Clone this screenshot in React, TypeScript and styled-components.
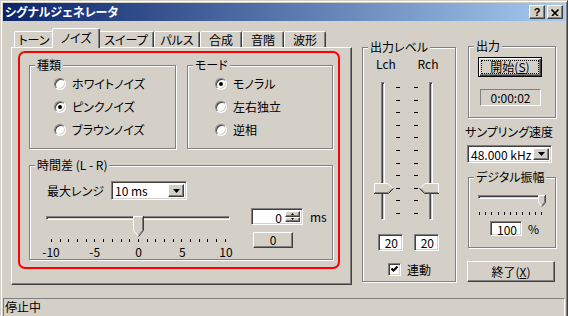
import React from 'react';
import styled, { createGlobalStyle } from 'styled-components';

const FACE = '#d4d0c8';
const SHADOW = '#808080';
const DARK = '#404040';

const GlobalStyle = createGlobalStyle`
  html, body {
    margin: 0;
    padding: 0;
    overflow: hidden;
    background: ${FACE};
  }
  body {
    font-family: "MS UI Gothic", "Noto Sans CJK JP", sans-serif;
    font-size: 12px;
    line-height: 12px;
    font-feature-settings: "palt";
    color: #000;
  }
`;

const Window = styled.div`
  box-sizing: border-box;
  width: 568px;
  height: 322px;
  padding: 2px;
  display: flex;
  flex-direction: column;
  background: ${FACE};
  border: 1px solid;
  border-color: ${FACE} ${DARK} ${DARK} ${FACE};
  box-shadow: inset 1px 1px #fff, inset -1px -1px ${SHADOW};
`;

const TitleBar = styled.div`
  flex: none;
  height: 18px;
  display: flex;
  align-items: center;
  padding: 0 2px;
  background: linear-gradient(to right, #0a246a, #a6caf0);
`;

const TitleText = styled.div`
  flex: 1;
  color: #fff;
  font-weight: bold;
`;

const CaptionButtons = styled.div`
  display: flex;
  gap: 2px;
`;

const Raised = `
  background: ${FACE};
  border: 1px solid;
  border-color: #fff ${DARK} ${DARK} #fff;
  box-shadow: inset -1px -1px ${SHADOW};
`;

const Sunken = `
  border: 1px solid;
  border-color: ${SHADOW} #fff #fff ${SHADOW};
  box-shadow: inset 1px 1px ${DARK}, inset -1px -1px ${FACE};
`;

const CaptionButton = styled.div`
  box-sizing: border-box;
  width: 16px;
  height: 14px;
  display: flex;
  align-items: center;
  justify-content: center;
  ${Raised}
  font-family: "Liberation Sans", sans-serif;
  font-weight: bold;
  font-size: 11px;
`;

const Body = styled.div`
  flex: none;
  box-sizing: border-box;
  height: 277px;
  display: flex;
  align-items: flex-start;
  padding: 7px 0 0 8px;
`;

/* ---- tab control ---- */

const TabControl = styled.div`
  width: 341px;
`;

const TabRow = styled.div`
  height: 19px;
  display: flex;
  align-items: flex-end;
  padding-left: 3px;
`;

const Tab = styled.div<{ $w: number; $active?: boolean }>`
  position: relative;
  z-index: ${p => (p.$active ? 1 : 0)};
  box-sizing: border-box;
  width: ${p => p.$w + (p.$active ? 4 : 0)}px;
  height: ${p => (p.$active ? 20 : 16)}px;
  margin: 0 ${p => (p.$active ? -2 : 0)}px ${p => (p.$active ? -1 : 0)}px;
  padding-top: ${p => (p.$active ? 3 : 2)}px;
  text-align: center;
  white-space: nowrap;
  background: ${FACE};
  border: 1px solid;
  border-bottom: none;
  border-color: #fff ${DARK} transparent #fff;
  border-radius: 2px 2px 0 0;
  box-shadow: inset -1px 0 ${SHADOW};
`;

const TabPanel = styled.div`
  box-sizing: border-box;
  height: 238px;
  padding: 3px 0 0 6px;
  border: 1px solid;
  border-color: #fff ${DARK} ${DARK} #fff;
  box-shadow: inset -1px -1px ${SHADOW};
`;

const Highlight = styled.div`
  box-sizing: border-box;
  width: 322px;
  height: 218px;
  padding: 6px 0 0 9px;
  border: 2px solid #ff0000;
  border-radius: 7px;
  display: grid;
  grid-template-columns: 147px 146px;
  grid-template-rows: 90px 101px;
  column-gap: 11px;
  row-gap: 10px;
`;

/* ---- group boxes ---- */

const GroupBox = styled.fieldset<{ $w?: number; $h?: number }>`
  box-sizing: border-box;
  width: ${p => (p.$w ? `${p.$w}px` : '100%')};
  height: ${p => (p.$h ? `${p.$h}px` : '100%')};
  margin: 0;
  padding: 0;
  min-width: 0;
  border: 1px solid ${SHADOW};
  box-shadow: inset 1px 1px #fff, 1px 1px #fff;
`;

const Legend = styled.legend`
  margin-left: 5px;
  padding: 0 2px;
  height: 12px;
  line-height: 12px;
  background: ${FACE};
  white-space: nowrap;
`;

const WideGroup = styled(GroupBox)`
  grid-column: 1 / -1;
`;

const RadioList = styled.div<{ $indent: number }>`
  display: flex;
  flex-direction: column;
  padding: 1px 0 0 ${p => p.$indent}px;
`;

const RadioRow = styled.div`
  height: 23px;
  display: flex;
  align-items: center;
  gap: 6px;
  white-space: nowrap;
`;

const Radio = styled.span<{ $checked?: boolean }>`
  box-sizing: border-box;
  width: 12px;
  height: 12px;
  border-radius: 50%;
  background: #fff;
  ${Sunken}
  display: flex;
  align-items: center;
  justify-content: center;

  &::after {
    content: '';
    width: 4px;
    height: 4px;
    border-radius: 50%;
    background: ${p => (p.$checked ? '#000' : 'transparent')};
  }
`;

/* ---- inputs ---- */

const ComboBox = styled.div<{ $w: number }>`
  box-sizing: border-box;
  width: ${p => p.$w}px;
  height: 19px;
  padding: 2px;
  display: flex;
  background: #fff;
  ${Sunken}
`;

const ComboText = styled.span`
  flex: 1;
  padding: 1px 0 0 1px;
  white-space: nowrap;
`;

const ComboArrow = styled.span`
  box-sizing: border-box;
  width: 16px;
  display: flex;
  align-items: center;
  justify-content: center;
  ${Raised}
`;

const ArrowDown = () => (
  <svg width="7" height="4" viewBox="0 0 7 4">
    <path d="M0 0H7L3.5 4Z" fill="#000" />
  </svg>
);

const NumberEdit = styled.div<{ $w: number; $h: number }>`
  box-sizing: border-box;
  width: ${p => p.$w}px;
  height: ${p => p.$h}px;
  padding: 2px 4px 0 0;
  text-align: right;
  background: #fff;
  ${Sunken}
`;

const SpinEdit = styled.div`
  box-sizing: border-box;
  width: 52px;
  height: 17px;
  padding: 2px;
  display: flex;
  background: #fff;
  ${Sunken}
`;

const SpinValue = styled.span`
  flex: 1;
  padding: 1px 3px 0 0;
  text-align: right;
`;

const SpinButtons = styled.div`
  width: 15px;
  display: flex;
  flex-direction: column;
`;

const SpinHalf = styled.div`
  box-sizing: border-box;
  flex: 1;
  display: flex;
  align-items: center;
  justify-content: center;
  ${Raised}
`;

const PushButton = styled.div<{ $w: number; $h: number; $default?: boolean }>`
  box-sizing: border-box;
  width: ${p => p.$w}px;
  height: ${p => p.$h}px;
  display: flex;
  align-items: center;
  justify-content: center;
  white-space: nowrap;
  background: ${FACE};
  border: 1px solid;
  border-color: ${p => (p.$default ? '#000' : `#fff ${DARK} ${DARK} #fff`)};
  box-shadow: ${p =>
    p.$default
      ? `inset 1px 1px #fff, inset -1px -1px ${DARK}, inset -2px -2px ${SHADOW}`
      : `inset -1px -1px ${SHADOW}`};
`;

const FocusRing = styled.span`
  flex: 1;
  align-self: stretch;
  margin: 3px;
  display: flex;
  align-items: center;
  justify-content: center;
  outline: 1px dotted #000;
`;

const Readout = styled.div`
  box-sizing: border-box;
  width: 61px;
  height: 17px;
  padding-top: 2px;
  text-align: center;
  border: 1px solid;
  border-color: ${SHADOW} #fff #fff ${SHADOW};
`;

const CheckBox = styled.span`
  box-sizing: border-box;
  width: 13px;
  height: 13px;
  display: flex;
  align-items: center;
  justify-content: center;
  background: #fff;
  ${Sunken}
`;

/* ---- sliders ---- */

const SliderArea = styled.div<{ $w: number; $h: number }>`
  position: relative;
  width: ${p => p.$w}px;
  height: ${p => p.$h}px;
`;

const HTrack = styled.div<{ $w: number; $top: number }>`
  box-sizing: border-box;
  width: ${p => p.$w}px;
  height: 4px;
  margin-top: ${p => p.$top}px;
  background: ${FACE};
  border: 1px solid;
  border-color: ${SHADOW} #fff #fff ${SHADOW};
  box-shadow: inset 1px 1px ${DARK};
`;

const ThumbHolder = styled.div`
  position: absolute;
  top: 0;
  line-height: 0;
`;

const TickRow = styled.div<{ $w: number; $h: number; $left: number; $top: number }>`
  width: ${p => p.$w}px;
  height: ${p => p.$h}px;
  margin: ${p => p.$top}px 0 0 ${p => p.$left}px;
  display: flex;
  justify-content: space-between;
`;

const Tick = styled.span`
  width: 1px;
  height: 100%;
  background: #000;
`;

const ScaleMark = styled.span`
  width: 0;
  display: flex;
  justify-content: center;
  white-space: nowrap;
`;

const VSliderBox = styled.div<{ $flip?: boolean }>`
  position: relative;
  width: 20px;
  height: 100%;
  margin-left: ${p => (p.$flip ? 1 : 0)}px;
  display: flex;
  justify-content: ${p => (p.$flip ? 'flex-end' : 'flex-start')};
`;

const VTrack = styled.div<{ $flip?: boolean }>`
  box-sizing: border-box;
  width: 4px;
  height: 100%;
  margin: 0 ${p => (p.$flip ? 6 : 0)}px 0 ${p => (p.$flip ? 0 : 7)}px;
  background: ${FACE};
  border: 1px solid;
  border-color: ${SHADOW} #fff #fff ${SHADOW};
  box-shadow: inset 1px 1px ${DARK};
`;

const DashColumn = styled.div<{ $left: number }>`
  box-sizing: border-box;
  width: 4px;
  height: 100%;
  margin-left: ${p => p.$left}px;
  padding: 5px 0 6px;
  display: flex;
  flex-direction: column;
  justify-content: space-between;
`;

const Dash = styled.span`
  height: 1px;
  background: #000;
`;

const ThumbDown = ({ w, h }: { w: number; h: number }) => {
  const tip = h - Math.round(w / 2) - 1;
  const mid = (w - 1) / 2;
  return (
    <svg width={w} height={h} viewBox={`0 0 ${w} ${h}`}>
      <path d={`M0 0H${w}V${tip}L${mid + 0.5} ${h}L0 ${tip}Z`} fill={FACE} />
      <path d={`M0.5 ${tip + 0.5}V0.5H${w - 1.5}`} stroke="#fff" fill="none" />
      <path d={`M0.5 ${tip + 0.5}L${mid} ${h - 1}`} stroke="#fff" fill="none" />
      <path d={`M${w - 0.5} 0V${tip + 0.5}L${mid + 0.5} ${h - 0.5}`} stroke={DARK} fill="none" />
      <path d={`M${w - 1.5} 1V${tip}L${mid + 0.5} ${h - 1.5}`} stroke={SHADOW} fill="none" />
    </svg>
  );
};

const ThumbSide = ({ flip }: { flip?: boolean }) => (
  <svg
    width="20"
    height="11"
    viewBox="0 0 20 11"
    style={flip ? { transform: 'scaleX(-1)' } : undefined}
  >
    <path d="M0 0H14L19.5 5.5L14 11H0Z" fill={FACE} />
    <path d="M0.5 10V0.5H14L18.5 5" stroke="#fff" fill="none" />
    <path d="M0 10.5H14.5L19.5 5.5" stroke={DARK} fill="none" />
    <path d="M1 9.5H14L18.5 5.5" stroke={SHADOW} fill="none" />
  </svg>
);

const CloseGlyph = () => (
  <svg width="8" height="7" viewBox="0 0 8 7">
    <path d="M0.5 0.5L7 7M7.5 0.5L1 7" stroke="#000" strokeWidth="1.6" fill="none" />
  </svg>
);

const CheckGlyph = () => (
  <svg width="7" height="7" viewBox="0 0 7 7">
    <path d="M0.5 2.5L2.5 4.5L6.5 0.5" stroke="#000" strokeWidth="2" fill="none" />
  </svg>
);

const SpinArrow = ({ up }: { up?: boolean }) => (
  <svg width="3" height="2" viewBox="0 0 3 2">
    <path d={up ? 'M0 2H3L1.5 0Z' : 'M0 0H3L1.5 2Z'} fill="#000" />
  </svg>
);

/* ---- time difference group ---- */

const TimeBody = styled.div`
  padding: 10px 0 0 17px;
`;

const RangeRow = styled.div`
  display: flex;
  align-items: center;
`;

const FieldLabel = styled.span`
  width: 64px;
  white-space: nowrap;
`;

const OffsetRow = styled.div`
  display: flex;
  margin: 8px 0 0 -1px;
`;

const SideControls = styled.div`
  margin-left: 19px;
  display: flex;
  flex-direction: column;
  align-items: flex-start;
`;

const SpinRow = styled.div`
  display: flex;
  align-items: center;
  gap: 7px;
`;

const SmallButtonSlot = styled.div`
  margin: 7px 0 0 2px;
`;

/* ---- output level column ---- */

const LevelGroup = styled(GroupBox)`
  margin: 13px 0 0 10px;
`;

const ChannelHeads = styled.div`
  display: flex;
  gap: 18px;
  padding: 5px 0 0 11px;
`;

const ChannelHead = styled.span`
  width: 24px;
  text-align: center;
`;

const LevelSliders = styled.div`
  height: 138px;
  margin-top: 12px;
  padding-left: 11px;
  display: flex;
`;

const LevelEdits = styled.div`
  display: flex;
  gap: 11px;
  margin-top: 14px;
  padding-left: 15px;
`;

const LinkRow = styled.div`
  display: flex;
  align-items: center;
  gap: 6px;
  margin-top: 12px;
  padding-left: 25px;
`;

/* ---- right column ---- */

const RightColumn = styled.div`
  width: 90px;
  margin: 12px 0 0 9px;
  display: flex;
  flex-direction: column;
  align-items: flex-start;
`;

const OutputGroup = styled(GroupBox)`
  margin-left: 3px;
`;

const StartSlot = styled.div`
  margin: 5px 0 0 9px;
`;

const ReadoutSlot = styled.div`
  margin: 12px 0 0 11px;
`;

const RateLabel = styled.div`
  margin-top: 8px;
  white-space: nowrap;
`;

const RateCombo = styled(ComboBox)`
  height: 18px;
  margin: 7px 0 0 2px;
`;

const AmpGroup = styled(GroupBox)`
  margin: 8px 0 0 3px;
`;

const AmpSlider = styled.div`
  margin: 12px 0 0 9px;
`;

const AmpEditRow = styled.div`
  display: flex;
  align-items: center;
  gap: 6px;
  margin: 6px 0 0 21px;
`;

const ExitSlot = styled.div`
  margin: 13px 0 0 2px;
`;

const StatusBar = styled.div`
  flex: none;
  box-sizing: border-box;
  height: 20px;
  padding: 2px 0 0 1px;
  border: 1px solid;
  border-color: ${SHADOW} #fff #fff ${SHADOW};
`;

const tabs = [
  { label: 'トーン', w: 40 },
  { label: 'ノイズ', w: 44, active: true },
  { label: 'スイープ', w: 56 },
  { label: 'パルス', w: 46 },
  { label: '合成', w: 42 },
  { label: '音階', w: 42 },
  { label: '波形', w: 42 },
];

const noiseTypes = ['ホワイトノイズ', 'ピンクノイズ', 'ブラウンノイズ'];
const modes = ['モノラル', '左右独立', '逆相'];

const range = 10;
const offset = 0;
const offsetTickSpan = 174;
const levelStep = 8;
const amplitude = 100;

const App: React.FC = () => {
  const offsetThumb = 5 + ((offset + range) / (range * 2)) * offsetTickSpan - 5;
  const levelThumb = 5 + levelStep * 12.6 - 5;
  const ampThumb = (amplitude / 100) * 60;

  return (
    <>
      <GlobalStyle />
      <Window>
        <TitleBar>
          <TitleText>シグナルジェネレータ</TitleText>
          <CaptionButtons>
            <CaptionButton>?</CaptionButton>
            <CaptionButton>
              <CloseGlyph />
            </CaptionButton>
          </CaptionButtons>
        </TitleBar>

        <Body>
          <TabControl>
            <TabRow>
              {tabs.map(t => (
                <Tab key={t.label} $w={t.w} $active={t.active}>
                  {t.label}
                </Tab>
              ))}
            </TabRow>
            <TabPanel>
              <Highlight>
                <GroupBox>
                  <Legend>種類</Legend>
                  <RadioList $indent={24}>
                    {noiseTypes.map((n, i) => (
                      <RadioRow key={n}>
                        <Radio $checked={i === 1} />
                        {n}
                      </RadioRow>
                    ))}
                  </RadioList>
                </GroupBox>
                <GroupBox>
                  <Legend>モード</Legend>
                  <RadioList $indent={27}>
                    {modes.map((m, i) => (
                      <RadioRow key={m}>
                        <Radio $checked={i === 0} />
                        {m}
                      </RadioRow>
                    ))}
                  </RadioList>
                </GroupBox>
                <WideGroup>
                  <Legend>時間差 (L - R)</Legend>
                  <TimeBody>
                    <RangeRow>
                      <FieldLabel>最大レンジ</FieldLabel>
                      <ComboBox $w={76}>
                        <ComboText>10 ms</ComboText>
                        <ComboArrow>
                          <ArrowDown />
                        </ComboArrow>
                      </ComboBox>
                    </RangeRow>
                    <OffsetRow>
                      <div>
                        <SliderArea $w={186} $h={21}>
                          <HTrack $w={184} $top={8} />
                          <ThumbHolder style={{ left: offsetThumb }}>
                            <ThumbDown w={11} h={21} />
                          </ThumbHolder>
                        </SliderArea>
                        <TickRow $w={175} $h={3} $left={5} $top={2}>
                          {Array.from({ length: 21 }, (_, i) => (
                            <Tick key={i} />
                          ))}
                        </TickRow>
                        <TickRow $w={175} $h={12} $left={5} $top={4}>
                          {['-10', '-5', '0', '5', '10'].map(s => (
                            <ScaleMark key={s}>{s}</ScaleMark>
                          ))}
                        </TickRow>
                      </div>
                      <SideControls>
                        <SpinRow>
                          <SpinEdit>
                            <SpinValue>0</SpinValue>
                            <SpinButtons>
                              <SpinHalf>
                                <SpinArrow up />
                              </SpinHalf>
                              <SpinHalf>
                                <SpinArrow />
                              </SpinHalf>
                            </SpinButtons>
                          </SpinEdit>
                          <span>ms</span>
                        </SpinRow>
                        <SmallButtonSlot>
                          <PushButton $w={40} $h={16}>
                            0
                          </PushButton>
                        </SmallButtonSlot>
                      </SideControls>
                    </OffsetRow>
                  </TimeBody>
                </WideGroup>
              </Highlight>
            </TabPanel>
          </TabControl>

          <LevelGroup $w={94} $h={241}>
            <Legend>出力レベル</Legend>
            <ChannelHeads>
              <ChannelHead>Lch</ChannelHead>
              <ChannelHead>Rch</ChannelHead>
            </ChannelHeads>
            <LevelSliders>
              <VSliderBox>
                <VTrack />
                <ThumbHolder style={{ top: levelThumb, left: 0 }}>
                  <ThumbSide />
                </ThumbHolder>
              </VSliderBox>
              <DashColumn $left={2}>
                {Array.from({ length: 11 }, (_, i) => (
                  <Dash key={i} />
                ))}
              </DashColumn>
              <DashColumn $left={14}>
                {Array.from({ length: 11 }, (_, i) => (
                  <Dash key={i} />
                ))}
              </DashColumn>
              <VSliderBox $flip>
                <VTrack $flip />
                <ThumbHolder style={{ top: levelThumb, left: 0 }}>
                  <ThumbSide flip />
                </ThumbHolder>
              </VSliderBox>
            </LevelSliders>
            <LevelEdits>
              <NumberEdit $w={25} $h={17}>20</NumberEdit>
              <NumberEdit $w={25} $h={17}>20</NumberEdit>
            </LevelEdits>
            <LinkRow>
              <CheckBox>
                <CheckGlyph />
              </CheckBox>
              連動
            </LinkRow>
          </LevelGroup>

          <RightColumn>
            <OutputGroup $w={88} $h={78}>
              <Legend>出力</Legend>
              <StartSlot>
                <PushButton $w={64} $h={20} $default>
                  <FocusRing>
                    開始(<u>S</u>)
                  </FocusRing>
                </PushButton>
              </StartSlot>
              <ReadoutSlot>
                <Readout>0:00:02</Readout>
              </ReadoutSlot>
            </OutputGroup>

            <RateLabel>サンプリング速度</RateLabel>
            <RateCombo $w={85}>
              <ComboText>48.000 kHz</ComboText>
              <ComboArrow>
                <ArrowDown />
              </ComboArrow>
            </RateCombo>

            <AmpGroup $w={88} $h={77}>
              <Legend>デジタル振幅</Legend>
              <AmpSlider>
                <SliderArea $w={68} $h={12}>
                  <HTrack $w={64} $top={4} />
                  <ThumbHolder style={{ left: ampThumb }}>
                    <ThumbDown w={8} h={12} />
                  </ThumbHolder>
                </SliderArea>
                <TickRow $w={63} $h={3} $left={1} $top={5}>
                  {Array.from({ length: 11 }, (_, i) => (
                    <Tick key={i} />
                  ))}
                </TickRow>
              </AmpSlider>
              <AmpEditRow>
                <NumberEdit $w={32} $h={15}>
                  {amplitude}
                </NumberEdit>
                %
              </AmpEditRow>
            </AmpGroup>

            <ExitSlot>
              <PushButton $w={88} $h={21}>
                終了(<u>X</u>)
              </PushButton>
            </ExitSlot>
          </RightColumn>
        </Body>

        <StatusBar>停止中</StatusBar>
      </Window>
    </>
  );
};

export default App;
